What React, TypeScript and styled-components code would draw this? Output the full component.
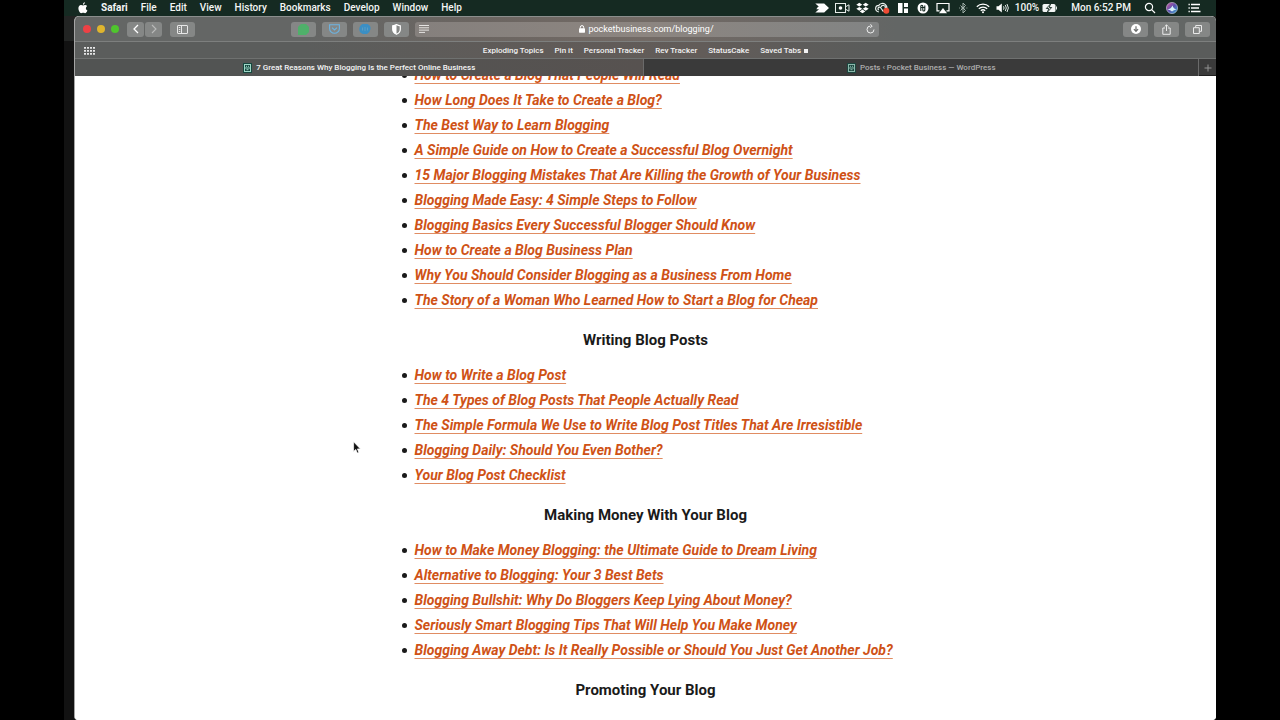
import React from "react";
import styled, { createGlobalStyle } from "styled-components";

const GlobalStyle = createGlobalStyle`
  *, *::before, *::after { box-sizing: border-box; }
  html, body { margin: 0; background: #000; }
  body { font-family: Roboto, "Liberation Sans", sans-serif; }
  button { font: inherit; color: inherit; border: 0; padding: 0; background: none; }
  a { color: inherit; text-decoration: none; }
  svg { display: block; flex: none; }
`;

const Screen = styled.div`
  display: flex;
  flex-direction: column;
  height: 100vh;
  margin: 0 64px;
  background: #121212;
  overflow: hidden;
`;

const MenuBar = styled.header`
  display: flex;
  align-items: center;
  justify-content: space-between;
  flex: none;
  height: 16px;
  padding: 0 15px 0 14px;
  background: #152a22;
  color: #f4f6f5;
  font-size: 10px;
  font-weight: 500;
  line-height: 16px;
`;

const MenuList = styled.nav`
  display: flex;
  align-items: center;
  gap: 13px;
`;

const MenuItem = styled.button<{ $bold?: boolean }>`
  font-weight: ${(p) => (p.$bold ? 700 : 500)};
  line-height: 16px;
`;

const StatusList = styled.div`
  display: flex;
  align-items: center;
  gap: 13px;
`;

const StatusGroup = styled.div<{ $gap: number }>`
  display: flex;
  align-items: center;
  gap: ${(p) => p.$gap}px;
`;

const Desktop = styled.div`
  position: relative;
  display: flex;
  flex: 1;
  min-height: 0;
  padding-left: 10px;
  background: linear-gradient(#222423 25px, #121212 25px);
`;

const BrowserWindow = styled.main`
  display: flex;
  flex-direction: column;
  flex: 1;
  min-width: 0;
  border-left: 1px solid #a5a5a5;
  border-radius: 5px 5px 4px 4px;
  background: #fff;
  overflow: hidden;
`;

const Toolbar = styled.div`
  display: grid;
  grid-template-columns: 1fr minmax(200px, 464px) 1fr;
  align-items: center;
  gap: 6px;
  flex: none;
  height: 26px;
  padding: 0 6px 0 8px;
  border-top: 1px solid #8b8e8d;
  border-bottom: 1px solid #7d7f7e;
  background: linear-gradient(90deg, #646665 20%, #6b6561 35%, #726a65 50%, #6b6764 62%, #636665 72%);
`;

const ToolGroup = styled.div<{ $gap: number }>`
  display: flex;
  align-items: center;
  gap: ${(p) => p.$gap}px;
`;

const ToolbarSide = styled.div<{ $end?: boolean }>`
  display: flex;
  align-items: center;
  justify-content: ${(p) => (p.$end ? "flex-end" : "space-between")};
`;

const Light = styled.button<{ $color: string }>`
  width: 8px;
  height: 8px;
  border-radius: 50%;
  background: ${(p) => p.$color};
`;

const ToolButton = styled.button<{ $narrow?: boolean }>`
  display: grid;
  place-items: center;
  width: ${(p) => (p.$narrow ? 17 : 25)}px;
  height: 15px;
  border-radius: 3px;
  background: #858786;
  color: #f5f5f5;
`;

const AddressBar = styled.div`
  display: grid;
  grid-template-columns: 1fr auto 1fr;
  align-items: center;
  height: 15px;
  padding: 0 4px;
  border-radius: 3px;
  background: linear-gradient(90deg, #85807d, #8c8580 50%, #828484);
  color: #f5f5f5;
`;

const AddressLabel = styled.label`
  display: flex;
  align-items: center;
  gap: 3px;
`;

const AddressInput = styled.input`
  field-sizing: content;
  border: 0;
  padding: 0;
  background: none;
  color: #fff;
  font-family: Roboto, "Liberation Sans", sans-serif;
  font-size: 9px;
  line-height: 15px;
`;

const ReloadButton = styled.button`
  justify-self: end;
`;

const FavoritesBar = styled.nav`
  display: grid;
  grid-template-columns: 1fr auto 1fr;
  align-items: center;
  flex: none;
  height: 17px;
  padding: 0 9px;
  border-bottom: 1px solid #6f7170;
  background: linear-gradient(90deg, #5b5d5c 20%, #605b58 40%, #625c59 55%, #5a5c5b 70%);
  color: #f2f2f2;
  font-size: 8px;
  font-weight: 500;
  line-height: 18px;
`;

const FavoriteLinks = styled.div`
  display: flex;
  gap: 11px;
`;

const FolderLink = styled.a`
  display: flex;
  align-items: center;
  gap: 3px;

  &::after {
    content: "";
    width: 4px;
    height: 4px;
    background: #f2f2f2;
  }
`;

const TabStrip = styled.div`
  display: grid;
  grid-template-columns: 570fr 555fr 17px;
  flex: none;
  height: 17px;
  border-bottom: 1px solid #1f1f1f;
  background: #3a3a3a;
  font-size: 8px;
  line-height: 16px;
`;

const Tab = styled.button<{ $active?: boolean }>`
  display: flex;
  align-items: center;
  justify-content: center;
  gap: 4px;
  min-width: 0;
  padding-top: 1px;
  border-right: 1px solid #6a6a6a;
  background: ${(p) => (p.$active ? "linear-gradient(90deg, #525453 30%, #575250)" : "#3a3a3a")};
  color: ${(p) => (p.$active ? "#f5f5f5" : "#adadad")};
  font-weight: 500;
  white-space: nowrap;
`;

const NewTabButton = styled.button`
  display: grid;
  place-items: center;
  color: #929292;
`;

const Page = styled.div`
  flex: 1;
  min-height: 0;
  overflow: hidden;
  background: #fff;
  color: #1a1a1a;
`;

const Article = styled.article`
  max-width: 512px;
  margin: -13px auto 0;
`;

const PostList = styled.ul`
  margin: 0;
  padding-left: 12px;
  list-style: none;
  font-size: 14px;
  line-height: 25px;
`;

const PostItem = styled.li`
  display: flex;
  align-items: center;
  gap: 8px;
  white-space: nowrap;

  &::before {
    content: "";
    width: 5px;
    height: 5px;
    border-radius: 50%;
    background: #1a1a1a;
  }
`;

const PostLink = styled.a`
  color: #cf5216;
  font-style: italic;
  font-weight: 700;
  text-decoration: underline 1px #e08c62;
  text-underline-offset: 3px;
  text-decoration-skip-ink: none;
`;

const SectionTitle = styled.h2`
  margin: 15px 0 10px;
  font-size: 15px;
  font-weight: 700;
  line-height: 25px;
  text-align: center;
`;

const Pointer = styled.svg`
  position: absolute;
  left: 289px;
  top: 425px;
`;

const SiteIcon = ({ dim }: { dim?: boolean }) => (
  <svg width="9" height="10" viewBox="0 0 9 10" opacity={dim ? 0.8 : 1}>
    <rect width="9" height="10" fill="#17483f" />
    <path d="M1.500 1v8M7.500 1v8M1.500 1.500h6M1.500 5h6M1.500 8.500h6" stroke="#9ed8c8" fill="none" />
    <path d="M3 3.300h1M5 3.300h1M3.500 6.700h2" stroke="#9ed8c8" />
  </svg>
);

const AppleLogo = () => (
  <svg width="10" height="12" viewBox="0 0 10 12" fill="#fff">
    <path d="M6.900.3C5.700.5 4.900 1.500 5 2.700 6.200 2.600 7 1.500 6.900.3zM5.100 3.500C4.500 3.500 3.900 3 3 3 1.500 3 .4 4.300.4 6.300c0 2.300 1.500 4.900 2.800 4.900.7 0 1-.4 1.900-.4s1.100.4 1.900.4c1 0 2-1.600 2.400-2.700C8.300 8 7.900 7.100 7.900 6.200c0-.9.5-1.600 1.200-2.100C8.600 3.400 7.900 3 7.100 3c-.8 0-1.500.5-2 .5z" />
  </svg>
);

const StatusIcons = () => (
  <>
    <svg width="14" height="12" viewBox="0 0 14 12" fill="#fff">
      <path d="M.3 1.500h8.900L14 6l-4.800 4.500H.3L4 7.200H1.300L3 4.800h1z" />
    </svg>
    <svg width="15" height="12" viewBox="0 0 15 12" fill="none" stroke="#e8eeeb">
      <rect x=".5" y="1.500" width="10" height="9" />
      <circle cx="5.500" cy="6" r="1.800" fill="#fff" stroke="none" />
      <path d="M10.500 4.800l3.500-2v6.400l-3.500-2" />
    </svg>
    <svg width="13" height="12" viewBox="0 0 13 12" fill="#fff">
      <path d="M3.300.8L.3 2.700l3 1.900 3-1.900zM9.700.8l-3 1.900 3 1.900 3-1.900zM3.300 4.900l-3 1.900 3 1.900 3-1.900zM9.700 4.900l-3 1.900 3 1.900 3-1.900zM6.500 7.500l-2.800 1.900 2.800 1.800 2.800-1.800z" />
    </svg>
    <svg width="15" height="12" viewBox="0 0 15 12" fill="none" stroke="#e8eeeb" strokeWidth="1.200">
      <path d="M3.800 9.800a3.200 3.200 0 010-6.400C5 1.300 8.200.7 10.200 2.400c1.600 1.400 2 3.200 1.400 5M3.800 8a1.500 1.500 0 011-2.800c1.300.2 2.400 3.400 3.700 4.400M6 5c1-2.600 4.800-1.800 4.300 1" />
      <circle cx="11.300" cy="8.700" r="3" fill="#ef4b34" stroke="none" />
    </svg>
    <svg width="14" height="12" viewBox="0 0 14 12" fill="#fff">
      <path d="M2 1h4.500v10H2zM8 1h4v4H8zM8 6.500h4V11H8z" />
    </svg>
    <svg width="14" height="12" viewBox="0 0 14 12">
      <circle cx="7" cy="6" r="5.500" fill="#fff" />
      <path d="M4.800 9V4.300q0-1 1-1t1 1V8q0 1 1 1t1-1V3.500M4.800 5.500h4" stroke="#152a22" strokeWidth="1.100" fill="none" />
    </svg>
    <svg width="14" height="12" viewBox="0 0 14 12" fill="none" stroke="#fff" strokeWidth="1.200">
      <path d="M3.500 8.800H1V1.500h12v7.300h-2.500" />
      <path d="M7 6l4 5.300H3z" fill="#fff" stroke="none" />
    </svg>
    <svg width="14" height="12" viewBox="0 0 14 12" fill="none" stroke="#a5b3ad">
      <path d="M4.500 3.500l5 5L7 11V1l2.500 2.500-5 5" />
      <path d="M3 6h.8M5.200 6h.8M8.300 6h.8M10.500 6h.8" />
    </svg>
    <svg width="14" height="12" viewBox="0 0 14 12" fill="none" stroke="#fff" strokeWidth="1.300">
      <path d="M.8 4.700a9 9 0 0112.400 0M2.800 6.800a6 6 0 018.400 0M4.800 8.800a3.200 3.200 0 014.400 0" />
      <circle cx="7" cy="10.300" r="1" fill="#fff" stroke="none" />
    </svg>
    <svg width="13" height="12" viewBox="0 0 13 12" fill="none" stroke="#dfe6e3">
      <path d="M.5 4.300h2L5.800 1.500v9L2.500 7.700h-2z" fill="#fff" stroke="none" />
      <path d="M7.500 4.300q1.200 1.700 0 3.400M9.300 3q2 3 0 6M11 2q2.700 4 0 8" />
    </svg>
  </>
);

const Siri = () => (
  <svg width="14" height="14" viewBox="0 0 14 14">
    <defs>
      <linearGradient id="siri" x1="0" y1="0" x2="1" y2="1">
        <stop offset="0" stopColor="#d65a9a" />
        <stop offset=".5" stopColor="#5a4fae" />
        <stop offset="1" stopColor="#37b7d8" />
      </linearGradient>
    </defs>
    <circle cx="7" cy="7" r="5.600" fill="url(#siri)" stroke="#c9c6dc" strokeWidth=".6" />
    <path d="M2.500 8.500Q6 8 7.500 4.500 8.500 8 11.500 8.500 8.500 9 7 10.500 5.500 9 2.500 8.500z" fill="#d5f3fa" />
  </svg>
);

const favorites = ["Exploding Topics", "Pin it", "Personal Tracker", "Rev Tracker", "StatusCake"];
const menus = ["File", "Edit", "View", "History", "Bookmarks", "Develop", "Window", "Help"];

const sections = [
  {
    title: "",
    posts: [
      "How to Create a Blog That People Will Read",
      "How Long Does It Take to Create a Blog?",
      "The Best Way to Learn Blogging",
      "A Simple Guide on How to Create a Successful Blog Overnight",
      "15 Major Blogging Mistakes That Are Killing the Growth of Your Business",
      "Blogging Made Easy: 4 Simple Steps to Follow",
      "Blogging Basics Every Successful Blogger Should Know",
      "How to Create a Blog Business Plan",
      "Why You Should Consider Blogging as a Business From Home",
      "The Story of a Woman Who Learned How to Start a Blog for Cheap",
    ],
  },
  {
    title: "Writing Blog Posts",
    posts: [
      "How to Write a Blog Post",
      "The 4 Types of Blog Posts That People Actually Read",
      "The Simple Formula We Use to Write Blog Post Titles That Are Irresistible",
      "Blogging Daily: Should You Even Bother?",
      "Your Blog Post Checklist",
    ],
  },
  {
    title: "Making Money With Your Blog",
    posts: [
      "How to Make Money Blogging: the Ultimate Guide to Dream Living",
      "Alternative to Blogging: Your 3 Best Bets",
      "Blogging Bullshit: Why Do Bloggers Keep Lying About Money?",
      "Seriously Smart Blogging Tips That Will Help You Make Money",
      "Blogging Away Debt: Is It Really Possible or Should You Just Get Another Job?",
    ],
  },
  { title: "Promoting Your Blog", posts: [] },
];

export default function App() {
  return (
    <>
      <GlobalStyle />
      <Screen>
        <MenuBar>
          <MenuList aria-label="Menu bar">
            <AppleLogo />
            <MenuItem $bold>Safari</MenuItem>
            {menus.map((m) => (
              <MenuItem key={m}>{m}</MenuItem>
            ))}
          </MenuList>
          <StatusList>
            <StatusGroup $gap={6}>
              <StatusIcons />
              <StatusGroup $gap={3}>
                <span>100%</span>
                <svg width="16" height="10" viewBox="0 0 16 10">
                  <rect x=".5" y="1" width="13" height="8" rx="1.500" fill="#f2f5f4" />
                  <path d="M14.500 3.500v3" stroke="#dfe6e3" />
                  <path d="M8.500 1L4.300 5.500h2.500L5.500 9l4.200-4.500H7.200z" fill="#f2f5f4" stroke="#152a22" strokeWidth=".9" />
                </svg>
              </StatusGroup>
            </StatusGroup>
            <span>Mon 6:52 PM</span>
            <StatusGroup $gap={9}>
              <svg width="12" height="12" viewBox="0 0 12 12" fill="none" stroke="#fff" strokeWidth="1.200">
                <circle cx="5" cy="5" r="3.600" />
                <path d="M7.700 7.700l3.300 3.300" />
              </svg>
              <Siri />
              <svg width="13" height="12" viewBox="0 0 13 12" fill="none" stroke="#fff" strokeWidth="1.300">
                <path d="M.5 2.500h1.300M3 2.500h9M.5 6h1.300M3 6h8M.5 9.500h1.300M3 9.500h9.500" />
              </svg>
            </StatusGroup>
          </StatusList>
        </MenuBar>
        <Desktop>
          <BrowserWindow>
            <Toolbar>
              <ToolbarSide>
                <ToolGroup $gap={8}>
                  <ToolGroup $gap={6}>
                    <Light $color="#ee4145" aria-label="Close" />
                    <Light $color="#dfb52e" aria-label="Minimize" />
                    <Light $color="#4fc52d" aria-label="Zoom" />
                  </ToolGroup>
                  <ToolGroup $gap={1}>
                    <ToolButton $narrow aria-label="Back">
                      <svg width="8" height="10" viewBox="0 0 8 10" fill="none" stroke="#fff" strokeWidth="1.300">
                        <path d="M6 1L2 5l4 4" />
                      </svg>
                    </ToolButton>
                    <ToolButton $narrow aria-label="Forward">
                      <svg width="8" height="10" viewBox="0 0 8 10" fill="none" stroke="#b9bab9" strokeWidth="1.100">
                        <path d="M2 1l4 4-4 4" />
                      </svg>
                    </ToolButton>
                  </ToolGroup>
                  <ToolButton aria-label="Show sidebar">
                    <svg width="11" height="9" viewBox="0 0 11 9" fill="none" stroke="#e6e6e6">
                      <rect x=".5" y=".5" width="10" height="8" rx=".5" />
                      <path d="M4.500.5v8M1.800 2.500h1.400M1.800 4.500h1.400M1.800 6.500h1.400" />
                    </svg>
                  </ToolButton>
                </ToolGroup>
                <ToolGroup $gap={6}>
                  <ToolButton aria-label="Extension">
                    <svg width="11" height="11" viewBox="0 0 11 11">
                      <path d="M3 0h5l3 3v5l-3 3H0V3z" fill="#4fb06a" />
                    </svg>
                  </ToolButton>
                  <ToolButton aria-label="Save to Pocket">
                    <svg width="11" height="10" viewBox="0 0 11 10" fill="none" stroke="#6cb4e2" strokeWidth="1.100">
                      <path d="M.6.8h9.800v3.600a4.900 4.900 0 01-9.800 0zM3 3.600l2.500 2.300L8 3.600" />
                    </svg>
                  </ToolButton>
                  <ToolButton aria-label="Extension">
                    <svg width="12" height="10" viewBox="0 0 12 10">
                      <path d="M3.500 0h5Q12 1.500 11.500 5T8 10H4Q.5 9 .3 5.500T3.500 0z" fill="#3b8fc4" />
                      <path d="M3.500 3.500v3M6 3v4M8.500 3.500v3" stroke="#5d9cc2" />
                    </svg>
                  </ToolButton>
                  <ToolButton aria-label="Privacy report">
                    <svg width="9" height="11" viewBox="0 0 9 11">
                      <path d="M4.500.6q1.800 1.200 3.800 1.200v3.500q0 3.500-3.800 5Q.7 8.800.7 5.300V1.800q2 0 3.800-1.200z" fill="none" stroke="#fff" strokeWidth="1.200" />
                      <path d="M4.500.6v9.700Q.7 8.800.7 5.300V1.800q2 0 3.800-1.200z" fill="#fff" />
                    </svg>
                  </ToolButton>
                </ToolGroup>
              </ToolbarSide>
              <AddressBar>
                <svg width="10" height="8" viewBox="0 0 10 8" stroke="#e6e4e2">
                  <path d="M0 .5h10M0 2.800h10M0 5.100h10M0 7.400h6" />
                </svg>
                <AddressLabel>
                  <svg width="6" height="8" viewBox="0 0 6 8">
                    <rect y="3.200" width="6" height="4.500" rx=".6" fill="#fff" />
                    <path d="M1.300 3.500V2.300a1.700 1.700 0 013.400 0v1.200" fill="none" stroke="#fff" />
                  </svg>
                  <AddressInput type="text" aria-label="Address" defaultValue="pocketbusiness.com/blogging/" />
                </AddressLabel>
                <ReloadButton aria-label="Reload">
                  <svg width="9" height="10" viewBox="0 0 9 10" fill="none" stroke="#ececec">
                    <path d="M4.500 2a3.500 3.500 0 103.500 3.500M4.300.2L6.200 2 4.300 3.900" />
                  </svg>
                </ReloadButton>
              </AddressBar>
              <ToolbarSide $end>
                <ToolGroup $gap={6}>
                  <ToolButton aria-label="Downloads">
                    <svg width="10" height="10" viewBox="0 0 10 10">
                      <circle cx="5" cy="5" r="5" fill="#fff" />
                      <path d="M5 2.200v5M2.900 5.200L5 7.300l2.100-2.100" stroke="#6c6e6d" strokeWidth="1.200" fill="none" />
                    </svg>
                  </ToolButton>
                  <ToolButton aria-label="Share">
                    <svg width="9" height="11" viewBox="0 0 9 11" fill="none" stroke="#e9e9e9">
                      <path d="M3 4H.8v6.300h7.400V4H6M4.500 7V1M2.700 2.600L4.500.8l1.800 1.800" />
                    </svg>
                  </ToolButton>
                  <ToolButton aria-label="Show tabs">
                    <svg width="9" height="9" viewBox="0 0 9 9" fill="none" stroke="#e9e9e9">
                      <path d="M.5 2.700h5.800v5.800H.5zM2.700 2.500v-2h5.800v5.800h-2" />
                    </svg>
                  </ToolButton>
                </ToolGroup>
              </ToolbarSide>
            </Toolbar>
            <FavoritesBar>
              <svg width="11" height="8" viewBox="0 0 11 8" stroke="#e6e6e6" strokeWidth="1.600" strokeDasharray="2 1">
                <path d="M0 .9h11M0 3.900h11M0 6.900h11" />
              </svg>
              <FavoriteLinks>
                {favorites.map((f) => (
                  <a href="#" key={f}>{f}</a>
                ))}
                <FolderLink href="#">Saved Tabs</FolderLink>
              </FavoriteLinks>
            </FavoritesBar>
            <TabStrip>
              <Tab $active>
                <SiteIcon />
                7 Great Reasons Why Blogging Is the Perfect Online Business
              </Tab>
              <Tab>
                <SiteIcon dim />
                Posts ‹ Pocket Business — WordPress
              </Tab>
              <NewTabButton aria-label="New tab">
                <svg width="8" height="8" viewBox="0 0 8 8" stroke="currentColor">
                  <path d="M4 .5v7M.5 4h7" />
                </svg>
              </NewTabButton>
            </TabStrip>
            <Page>
              <Article>
                {sections.map((s) => (
                  <section key={s.title || "start"}>
                    {s.title && <SectionTitle>{s.title}</SectionTitle>}
                    {s.posts.length > 0 && (
                      <PostList>
                        {s.posts.map((p) => (
                          <PostItem key={p}>
                            <PostLink href="#">{p}</PostLink>
                          </PostItem>
                        ))}
                      </PostList>
                    )}
                  </section>
                ))}
              </Article>
            </Page>
          </BrowserWindow>
          <Pointer width="9" height="14" viewBox="0 0 9 14">
            <path d="M.6.8v9.600l2.200-2 1.500 3.700 1.600-.7-1.500-3.500h3z" fill="#111" stroke="#fff" strokeWidth=".7" />
          </Pointer>
        </Desktop>
      </Screen>
    </>
  );
}
